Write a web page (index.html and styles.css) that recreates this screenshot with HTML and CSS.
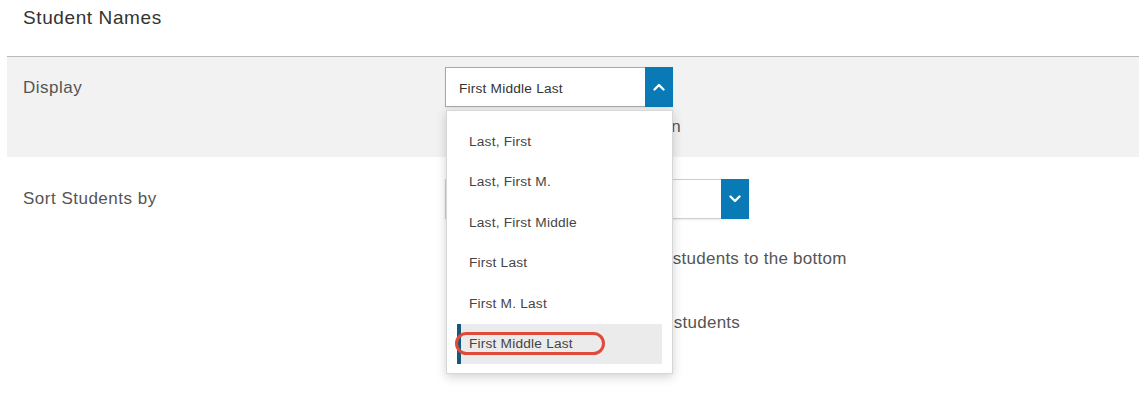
FILE: index.html
```html
<!DOCTYPE html>
<html lang="en">
<head>
  <meta charset="UTF-8">
  <title>Student Names</title>
  <link rel="stylesheet" href="styles.css">
</head>
<body>
  <div class="page">
    <h2 class="section-title">Student Names</h2>

    <div class="setting-row shaded">
      <div class="setting-label">Display</div>
      <div class="setting-control">
        <div class="select-wrap">
          <div class="select open">
            <span class="select-value">First Middle Last</span>
            <span class="select-btn">
              <svg viewBox="0 0 12 8" aria-hidden="true"><polyline points="1.5,6.5 6,2 10.5,6.5"/></svg>
            </span>
          </div>
          <ul class="select-menu">
            <li>Last, First</li>
            <li>Last, First M.</li>
            <li>Last, First Middle</li>
            <li>First Last</li>
            <li>First M. Last</li>
            <li class="selected">First Middle Last<span class="callout"></span></li>
          </ul>
        </div>
        <label class="check-row"><span class="checkbox"></span>Show the student ID column</label>
      </div>
    </div>

    <div class="setting-row">
      <div class="setting-label">Sort Students by</div>
      <div class="setting-control">
        <div class="select wide">
          <span class="select-value">Last Name</span>
          <span class="select-btn">
            <svg viewBox="0 0 12 8" aria-hidden="true"><polyline points="1.5,1.5 6,6 10.5,1.5"/></svg>
          </span>
        </div>
        <label class="check-row first"><span class="checkbox"></span>Move inactive or dropped students to the bottom</label>
        <label class="check-row second"><span class="checkbox"></span>Show inactive or dropped students</label>
      </div>
    </div>
  </div>
</body>
</html>
```
FILE: styles.css
```css
* {
  margin: 0;
  padding: 0;
  box-sizing: border-box;
}

html, body {
  min-height: 100%;
}

body {
  font-family: 'Liberation Sans', Arial, sans-serif;
  background-color: #fff;
  color: #555;
  min-height: 100vh;
}

.page {
  margin-left: 7px;
  width: 1132px;
  min-height: 393px;
}

.section-title {
  font-size: 19px;
  font-weight: 400;
  letter-spacing: 0.6px;
  color: #333;
  line-height: 22px;
  height: 57px;
  padding: 7px 0 0 16px;
  border-bottom: 1px solid #b9b9b9;
}

.setting-row {
  display: grid;
  grid-template-columns: 438px 1fr;
  padding-top: 22px;
}

.setting-row.shaded {
  background-color: #f2f2f2;
  padding: 10px 0 20px;
}

.setting-label {
  font-size: 17px;
  letter-spacing: 0.5px;
  line-height: 20px;
  padding: 10px 0 0 16px;
  color: #555;
}

.shaded .setting-label {
  padding-top: 11px;
}

.setting-control {
  display: flex;
  flex-direction: column;
  align-items: flex-start;
}

.select-wrap {
  position: relative;
}

.select {
  display: flex;
  width: 228px;
  height: 40px;
  border: 1px solid #a9a9a9;
  background-color: #fff;
  box-shadow: 0 1px 2px rgba(0, 0, 0, 0.08);
}

.select.wide {
  width: 304px;
  height: 40px;
  border-color: #cfcfcf;
}

.select-value {
  flex: 1;
  font-size: 13.7px;
  letter-spacing: 0.2px;
  color: #333;
  line-height: 34px;
  padding: 4px 0 0 13px;
}

.select-btn {
  width: 28px;
  margin: -1px -1px -1px 0;
  background-color: #0a7ab6;
  display: flex;
  align-items: center;
  justify-content: center;
}

.select-btn svg {
  width: 12px;
  height: 8px;
  fill: none;
  stroke: #fff;
  stroke-width: 2.3;
  stroke-linecap: round;
  stroke-linejoin: round;
}

.select-menu {
  position: absolute;
  top: 43px;
  left: 1px;
  width: 227px;
  list-style: none;
  background-color: #fff;
  border: 1px solid #d6d6d6;
  box-shadow: 0 3px 10px rgba(0, 0, 0, 0.18);
  padding: 11px 10px 9px;
  z-index: 5;
}

.select-menu li {
  position: relative;
  height: 40.4px;
  line-height: 40.4px;
  font-size: 13.7px;
  letter-spacing: 0.2px;
  color: #444;
  padding-left: 12px;
}

.select-menu li.selected {
  background-color: #ebebeb;
  border-left: 4px solid #14597d;
  padding-left: 8px;
}

.callout {
  position: absolute;
  left: -6px;
  top: 8px;
  width: 150px;
  height: 23px;
  border: 3px solid #e04a3a;
  border-radius: 12px;
}

.check-row {
  display: flex;
  align-items: center;
  gap: 8px;
  font-size: 17px;
  letter-spacing: 0.25px;
  line-height: 20px;
  color: #555;
  margin-top: 10px;
  white-space: nowrap;
}

.shaded .check-row {
  gap: 5px;
  letter-spacing: 0;
}

.check-row.first {
  margin-top: 30px;
}

.check-row.second {
  margin-top: 44px;
}

.checkbox {
  width: 16px;
  height: 16px;
  margin-left: 2px;
  border: 1px solid #999;
  background-color: #fff;
}
```
